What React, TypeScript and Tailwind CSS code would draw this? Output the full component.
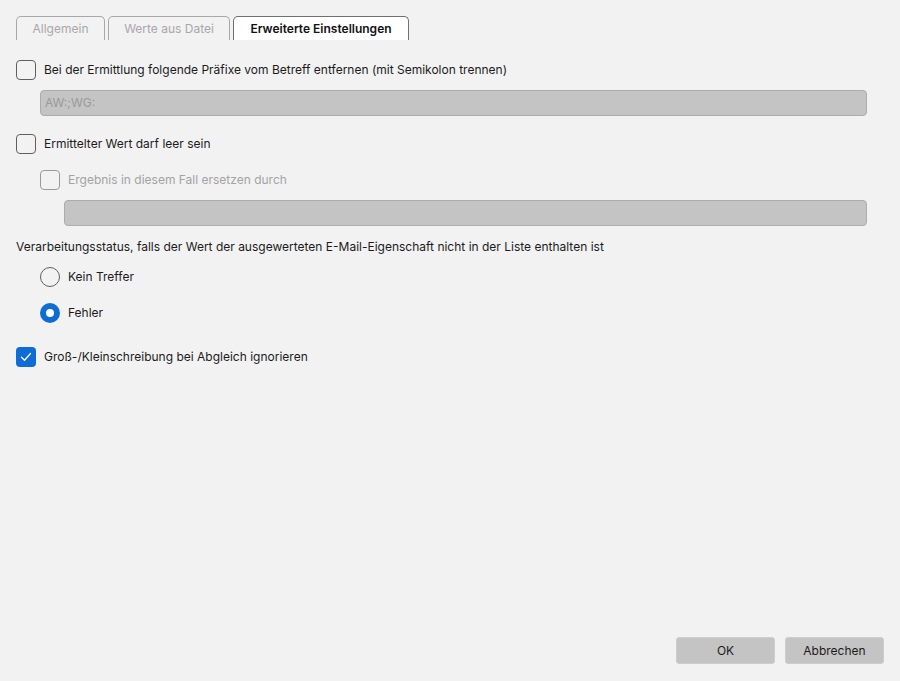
import React, { useState } from 'react';

const TABS = [
    { label: 'Allgemein', width: 89 },
    { label: 'Werte aus Datei', width: 122 },
    { label: 'Erweiterte Einstellungen', width: 176 },
];

const Checkbox: React.FC<{ checked?: boolean; disabled?: boolean; label: string; onChange?: () => void }> = ({ checked, disabled, label, onChange }) => (
    <label className="flex items-center gap-2 cursor-default select-none" onClick={disabled ? undefined : onChange}>
        <span
            className={`w-5 h-5 rounded-[4px] flex items-center justify-center shrink-0 ${checked ? 'bg-[#0f6cd6]' : disabled ? 'border border-[#9a9a9a]' : 'border border-[#5f5f5f]'}`}
        >
            {checked && (
                <svg width="12" height="10" viewBox="0 0 12 10" fill="none">
                    <path d="M1.5 5.2L4.5 8.2L10.5 1.5" stroke="white" strokeWidth="1.3" strokeLinecap="round" strokeLinejoin="round" />
                </svg>
            )}
        </span>
        <span className={disabled ? 'text-[#a3a3a3]' : 'text-[#1b1b1b]'}>{label}</span>
    </label>
);

const Radio: React.FC<{ checked: boolean; label: string; onSelect: () => void }> = ({ checked, label, onSelect }) => (
    <label className="flex items-center gap-2 cursor-default select-none" onClick={onSelect}>
        {checked ? (
            <span className="w-5 h-5 rounded-full bg-[#0f6cd6] flex items-center justify-center shrink-0">
                <span className="w-2 h-2 rounded-full bg-white" />
            </span>
        ) : (
            <span className="w-5 h-5 rounded-full border border-[#5f5f5f] shrink-0" />
        )}
        <span className="text-[#1b1b1b]">{label}</span>
    </label>
);

export default function App() {
    const [tab, setTab] = useState(2);
    const [stripPrefix, setStripPrefix] = useState(false);
    const [allowEmpty, setAllowEmpty] = useState(false);
    const [status, setStatus] = useState<'none' | 'error'>('error');
    const [ignoreCase, setIgnoreCase] = useState(true);

    return (
        <div className="w-[900px] h-[681px] bg-[#f2f2f2] flex flex-col text-[12px] leading-none" style={{ fontFamily: 'Inter, "Noto Sans", sans-serif' }}>
            <div className="flex-1 pl-4 pr-[33px] pt-4">
                {/* tab strip */}
                <div className="flex gap-[3px] h-6">
                    {TABS.map((t, i) => (
                        <button
                            key={t.label}
                            onClick={() => setTab(i)}
                            className={`h-6 px-0 whitespace-nowrap rounded-t-[5px] border border-b-0 ${i === tab ? 'bg-white border-[#707070] text-[#111] font-semibold' : 'border-[#a8a8a8] text-[#a8a8a8]'}`}
                            style={{ width: t.width }}
                        >
                            {t.label}
                        </button>
                    ))}
                </div>

                <div className="flex flex-col mt-5">
                    <Checkbox checked={stripPrefix} label="Bei der Ermittlung folgende Präfixe vom Betreff entfernen (mit Semikolon trennen)" onChange={() => setStripPrefix(!stripPrefix)} />
                    <div className="ml-6 mt-[10px] h-[26px] bg-[#c4c4c4] border border-[#acacac] rounded-[4px] flex items-center px-1 text-[#9a9a9a]">
                        AW:;WG:
                    </div>

                    <div className="mt-[18px]">
                        <Checkbox checked={allowEmpty} label="Ermittelter Wert darf leer sein" onChange={() => setAllowEmpty(!allowEmpty)} />
                    </div>
                    <div className="ml-6 mt-4">
                        <Checkbox disabled label="Ergebnis in diesem Fall ersetzen durch" />
                    </div>
                    <div className="ml-12 mt-[10px] h-[26px] bg-[#c4c4c4] border border-[#acacac] rounded-[4px]" />

                    <p className="mt-[15px] text-[#1b1b1b]">Verarbeitungsstatus, falls der Wert der ausgewerteten E-Mail-Eigenschaft nicht in der Liste enthalten ist</p>
                    <div className="ml-6 mt-[14px] flex flex-col gap-4">
                        <Radio checked={status === 'none'} label="Kein Treffer" onSelect={() => setStatus('none')} />
                        <Radio checked={status === 'error'} label="Fehler" onSelect={() => setStatus('error')} />
                    </div>

                    <div className="mt-[24px]">
                        <Checkbox checked={ignoreCase} label="Groß-/Kleinschreibung bei Abgleich ignorieren" onChange={() => setIgnoreCase(!ignoreCase)} />
                    </div>
                </div>
            </div>

            <div className="flex justify-end gap-[10px] pr-4 pb-[17px]">
                <button className="w-[99px] h-[27px] bg-[#c4c4c4] border border-[#cdcdcd] rounded-[3px] text-[#1b1b1b]">OK</button>
                <button className="w-[99px] h-[27px] bg-[#c4c4c4] border border-[#cdcdcd] rounded-[3px] text-[#1b1b1b]">Abbrechen</button>
            </div>
        </div>
    );
}
